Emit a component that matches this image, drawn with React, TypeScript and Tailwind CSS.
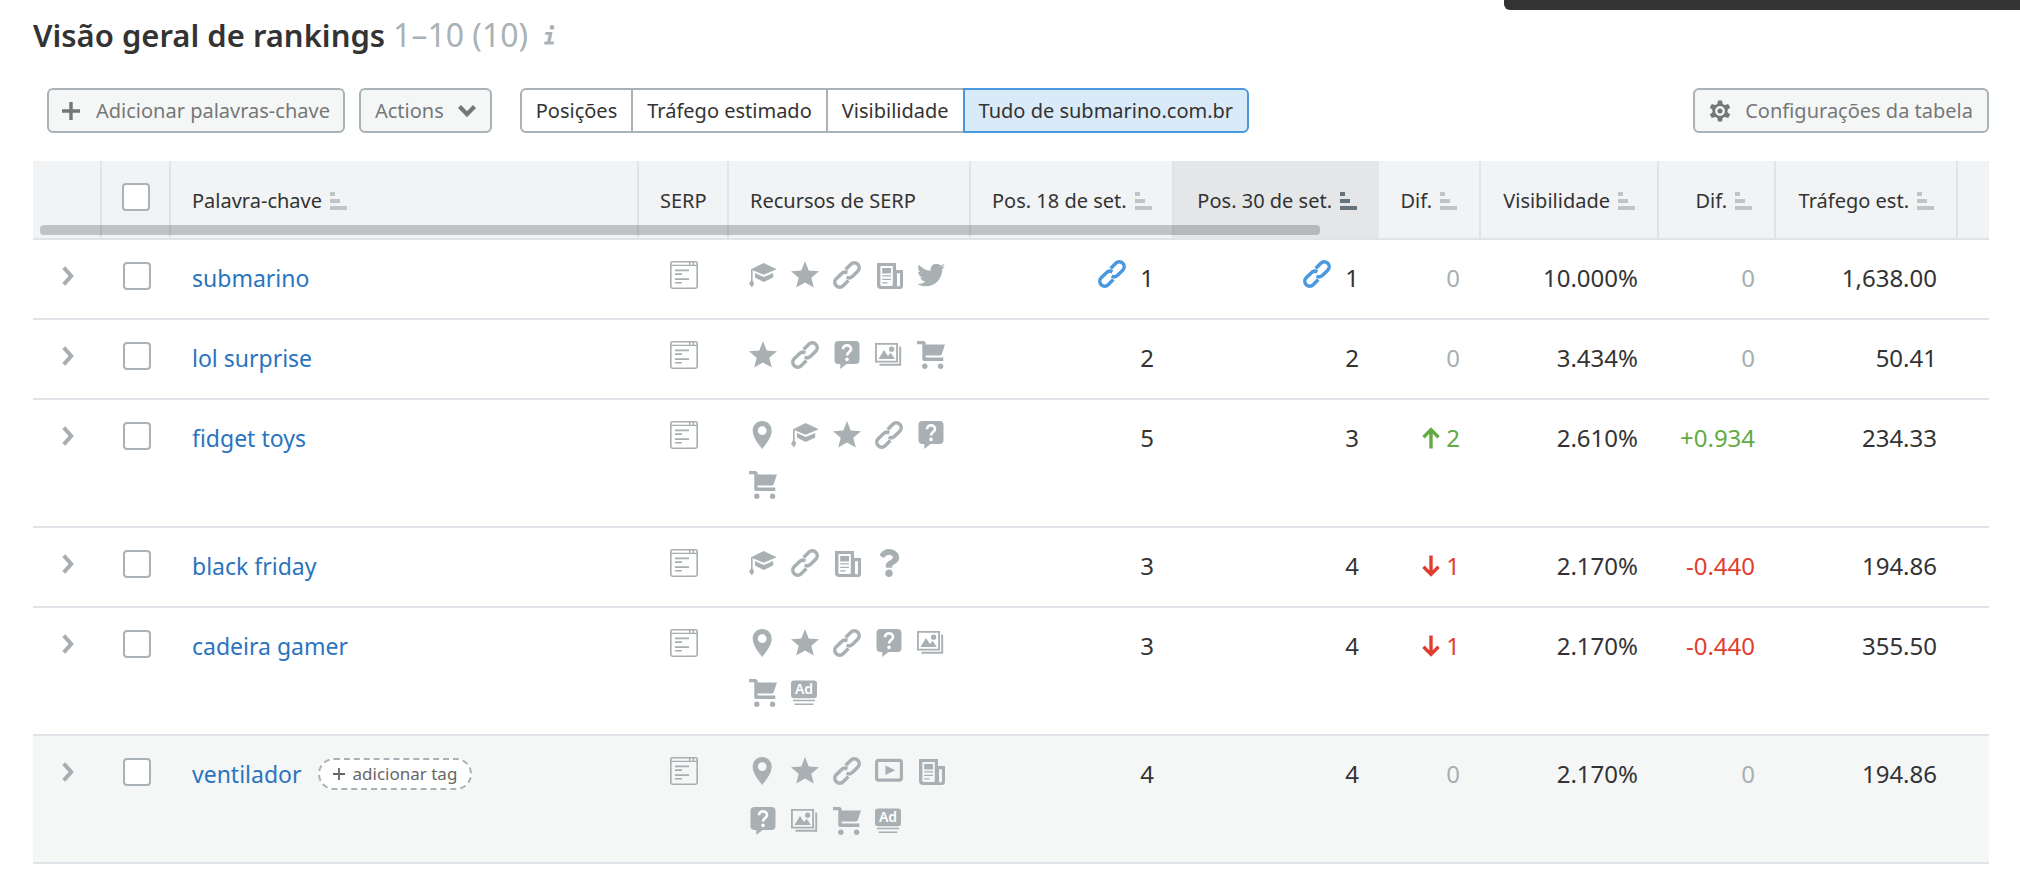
import React, { ReactNode } from "react";
import { FaTwitter, FaQuestion } from "react-icons/fa";

type IconProps = { className?: string };

const Svg = ({ children, className = "" }: IconProps & { children: ReactNode }) => (
  <svg viewBox="0 0 28 28" className={`size-7 shrink-0 ${className}`} fill="currentColor" aria-hidden="true">
    {children}
  </svg>
);

const LinkIcon = ({ className }: IconProps) => (
  <Svg className={className}>
    <g transform="translate(14 14) rotate(-45)" fill="none" stroke="currentColor" strokeWidth="3.5">
      <path d="M3 -4.9H10.3A4.9 4.9 0 0 1 10.3 4.9H3A4.9 4.9 0 0 1 -1.7 1.2" />
      <path d="M3 -4.9H10.3A4.9 4.9 0 0 1 10.3 4.9H3A4.9 4.9 0 0 1 -1.7 1.2" transform="rotate(180)" />
    </g>
  </Svg>
);

const CapIcon = () => (
  <Svg>
    <path d="M14.7 2 27.7 8.2 14.7 13.7 3.6 9.2V19.5L5.2 22.5 3 26.5 0 22.8 2 19.5V8.2Z" />
    <path d="M6 12 14.7 16 24.2 12V16.6L14.7 21 6 16.6Z" />
  </Svg>
);

const StarIcon = () => (
  <Svg>
    <path d="M14 0 17.7 9.4 28 10.2 20.3 16.8 22.8 26.4 14 21.4 5.2 26.4 7.7 16.8 0 10.2 10.3 9.4Z" />
  </Svg>
);

const NewsIcon = () => (
  <Svg>
    <path
      fillRule="evenodd"
      d="M2 2H21V9H28V25A3 3 0 0 1 25 28H6A4 4 0 0 1 2 24ZM5.4 5V23.5A1.5 1.5 0 0 0 6.9 25H16.3A1.5 1.5 0 0 0 17.8 23.5V5ZM22 12.2V24A1.3 1.3 0 0 0 25 24V12.2Z"
    />
    <path d="M7.2 7h8.8v5.4H7.2zM7.2 14.2h8.8v1.3H7.2zM7.2 17.7h8.8v1.3H7.2zM7.2 21.2h5.4v1.3H7.2z" />
  </Svg>
);

const TwitterIcon = () => <FaTwitter className="size-7 shrink-0" aria-hidden="true" />;
const QuestionIcon = () => <FaQuestion className="size-7 shrink-0" aria-hidden="true" />;

const FaqIcon = () => (
  <Svg>
    <path d="M5.5 0H22.5A4 4 0 0 1 26.5 4V19A4 4 0 0 1 22.5 23H13.5L7.3 28V23H5.5A4 4 0 0 1 1.5 19V4A4 4 0 0 1 5.5 0Z" />
    <path d="M10 8.2C10 3.2 18 3.2 18 8C18 11 14 11 14 14.6" fill="none" stroke="white" strokeWidth="2.7" />
    <circle cx="14" cy="18.4" r="1.8" fill="white" />
  </Svg>
);

const ImageIcon = () => (
  <Svg>
    <path d="M.9 2.9H22.1V20.6H.9Z" fill="none" stroke="currentColor" strokeWidth="1.9" />
    <path d="M25.2 5.5V23.8H4.5" fill="none" stroke="currentColor" strokeWidth="1.9" />
    <circle cx="16.6" cy="8.2" r="2.6" />
    <path d="M3.5 18 9 9 13 15 15.7 11.8 19.8 18Z" />
  </Svg>
);

const CartIcon = () => (
  <Svg>
    <path d="M0 0H6A2.6 2.6 0 0 1 8.6 3.4H28L24.8 13A2 2 0 0 1 23 14.4H8.6V16.6H26.3V20H7.2A2 2 0 0 1 5.3 18V3.2H0Z" />
    <circle cx="7.8" cy="25.2" r="2.7" />
    <circle cx="23.6" cy="25.2" r="2.7" />
  </Svg>
);

const PinIcon = () => (
  <Svg>
    <path
      fillRule="evenodd"
      d="M13.2 0C18.6 0 22.7 4.2 22.7 9.7C22.7 16 17 23 13.2 28C9.4 23 3.7 16 3.7 9.7C3.7 4.2 7.8 0 13.2 0ZM13.2 5.2A4.4 4.4 0 1 0 13.2 14A4.4 4.4 0 1 0 13.2 5.2Z"
    />
  </Svg>
);

const VideoIcon = () => (
  <Svg>
    <rect x="1.6" y="3.4" width="24.8" height="19.8" rx="2.2" fill="none" stroke="currentColor" strokeWidth="3.2" />
    <path d="M10.4 8.6 20.4 13.3 10.4 18Z" />
  </Svg>
);

const AdIcon = () => (
  <Svg>
    <rect x="0" y="1.4" width="26" height="17.8" rx="3" />
    <path d="M2 20.8h22v1.5H2zM3.5 24.6h19v1.5h-19z" />
    <text
      x="13"
      y="15.4"
      textAnchor="middle"
      fontFamily="'Noto Sans', sans-serif"
      fontSize="14"
      fontWeight="600"
      fill="white"
    >
      Ad
    </text>
  </Svg>
);

const SerpIcon = () => (
  <Svg>
    <rect x=".8" y=".8" width="26.4" height="26.4" rx="1.6" fill="none" stroke="currentColor" strokeWidth="1.6" />
    <path d="M1 4.4H27M19.8 1V4.4M23.4 1V4.4" fill="none" stroke="currentColor" strokeWidth="1.4" />
    <path d="M5 8.6h14v1.7H5zM5 12.3h7v1.7H5zM5 17.3h14v1.7H5zM5 20.9h7v1.7H5z" />
  </Svg>
);

const features = {
  cap: CapIcon,
  star: StarIcon,
  link: LinkIcon,
  news: NewsIcon,
  twitter: TwitterIcon,
  faq: FaqIcon,
  image: ImageIcon,
  cart: CartIcon,
  pin: PinIcon,
  question: QuestionIcon,
  video: VideoIcon,
  ad: AdIcon,
};

type Feature = keyof typeof features;

type Row = {
  keyword: string;
  features: Feature[];
  from: number;
  to: number;
  linked?: boolean;
  diff: number;
  visibility: string;
  visibilityDiff: string;
  traffic: string;
  hovered?: boolean;
};

const rows: Row[] = [
  { keyword: "submarino", features: ["cap", "star", "link", "news", "twitter"], from: 1, to: 1, linked: true, diff: 0, visibility: "10.000%", visibilityDiff: "0", traffic: "1,638.00" },
  { keyword: "lol surprise", features: ["star", "link", "faq", "image", "cart"], from: 2, to: 2, diff: 0, visibility: "3.434%", visibilityDiff: "0", traffic: "50.41" },
  { keyword: "fidget toys", features: ["pin", "cap", "star", "link", "faq", "cart"], from: 5, to: 3, diff: 2, visibility: "2.610%", visibilityDiff: "+0.934", traffic: "234.33" },
  { keyword: "black friday", features: ["cap", "link", "news", "question"], from: 3, to: 4, diff: -1, visibility: "2.170%", visibilityDiff: "-0.440", traffic: "194.86" },
  { keyword: "cadeira gamer", features: ["pin", "star", "link", "faq", "image", "cart", "ad"], from: 3, to: 4, diff: -1, visibility: "2.170%", visibilityDiff: "-0.440", traffic: "355.50" },
  { keyword: "ventilador", features: ["pin", "star", "link", "video", "news", "faq", "image", "cart", "ad"], from: 4, to: 4, diff: 0, visibility: "2.170%", visibilityDiff: "0", traffic: "194.86", hovered: true },
];

const diffColor = (diff: number) =>
  diff > 0 ? "text-[#62ab42]" : diff < 0 ? "text-[#e03e2f]" : "text-[#a6b0b3]";

const SortIcon = ({ active }: { active?: boolean }) => (
  <svg viewBox="0 0 18 18" className={`size-[18px] shrink-0 ${active ? "text-[#64747a]" : "text-[#bfc5c6]"}`} fill="currentColor" aria-hidden="true">
    <path d="M0 0h5v4H0zM0 7h10v4H0zM0 14h17v4H0z" />
  </svg>
);

const Checkbox = ({ label }: { label: string }) => (
  <input
    type="checkbox"
    aria-label={label}
    className="mx-auto block size-7 appearance-none rounded border-2 border-[#a9b2b6] bg-white checked:bg-[#4a98e0]"
  />
);

const HeadCell = ({ children, sort = true, active, end }: { children?: ReactNode; sort?: boolean; active?: boolean; end?: boolean }) => (
  <th
    scope="col"
    aria-sort={active ? "ascending" : undefined}
    className={`border-b-2 border-[#e0e4e8] px-[21px] pt-[26px] align-top font-normal ${
      active ? "bg-[#e4e6e8]" : "border-r-2 last:border-r-0"
    }`}
  >
    {sort ? (
      <button type="button" className={`flex items-center gap-2 whitespace-nowrap leading-7 ${end ? "ml-auto" : ""}`}>
        {children}
        <SortIcon active={active} />
      </button>
    ) : (
      <span className="block whitespace-nowrap text-left leading-7">{children}</span>
    )}
  </th>
);

const DiffArrow = ({ down }: { down: boolean }) => (
  <svg viewBox="0 0 18 22" className={`h-[22px] w-[18px] shrink-0 ${down ? "rotate-180" : ""}`} fill="none" stroke="currentColor" strokeWidth="3.4" aria-hidden="true">
    <path d="M9 21.5V2.5M1.5 10.2 9 2.6l7.5 7.6" />
  </svg>
);

const toolButton =
  "flex h-[45px] items-center rounded-md border-2 border-[#a9b2b6] bg-[#f5f7f7] text-[20px] whitespace-nowrap text-[#757778]";

const tabs = ["Posições", "Tráfego estimado", "Visibilidade", "Tudo de submarino.com.br"];

export default function App() {
  return (
    <main className="relative bg-white pr-[31px] pb-3 pl-[33px] font-['Noto_Sans',sans-serif] text-[#333]">
      <div className="absolute top-0 right-0 h-[10px] w-[516px] rounded-bl-md bg-[#333]" />

      <h1 className="flex items-center gap-2 pt-[14px] text-[31px] leading-[42px] font-semibold whitespace-nowrap">
        Visão geral de rankings
        <span className="text-[32px] font-normal text-[#a9b2b6]">1–10 (10)</span>
        <button type="button" aria-label="Informações" className="ml-2 text-[#a9b2b6]">
          <svg viewBox="0 0 12 20" className="h-5 w-3" fill="currentColor" aria-hidden="true">
            <circle cx="8" cy="2.4" r="2.4" />
            <path d="M1.6 7H8.6L6.6 16.6H10L9.5 19.4H0L.6 16.6H3.2L4.6 9.8H1Z" />
          </svg>
        </button>
      </h1>

      <div className="mt-8 flex items-center pl-[14px]">
        <button type="button" className={`${toolButton} gap-4 px-[13px]`}>
          <svg viewBox="0 0 18 18" className="size-[18px]" fill="currentColor" aria-hidden="true">
            <path d="M7.3 0h3.4v7.3H18v3.4h-7.3V18H7.3v-7.3H0V7.3h7.3z" />
          </svg>
          Adicionar palavras-chave
        </button>
        <button type="button" className={`${toolButton} ml-[14px] gap-[14px] px-[14px]`}>
          Actions
          <svg viewBox="0 0 18 12" className="h-3 w-[18px]" fill="none" stroke="currentColor" strokeWidth="4.2" aria-hidden="true">
            <path d="M1.5 1.5 9 9.2l7.5-7.7" />
          </svg>
        </button>
        <div className="ml-7 flex">
          {tabs.map((tab, i) => {
            const selected = i === tabs.length - 1;
            return (
              <button
                key={tab}
                type="button"
                aria-pressed={selected}
                className={`h-[45px] border-2 px-[14px] text-[20px] whitespace-nowrap first:rounded-l-md last:rounded-r-md ${
                  selected ? "border-[#4a98e0] bg-[#d9eaf8]" : "border-r-0 border-[#a9b2b6] bg-white"
                }`}
              >
                {tab}
              </button>
            );
          })}
        </div>
        <button type="button" className={`${toolButton} ml-auto gap-[14px] px-[14px]`}>
          <svg viewBox="0 0 22 22" className="size-[22px]" aria-hidden="true">
            <g fill="currentColor">
              <circle cx="11" cy="11" r="7.6" />
              <path d="M9 .4h4l1 5H8zM9 21.6h4l1-5H8z" />
              <path d="M9 .4h4l1 5H8zM9 21.6h4l1-5H8z" transform="rotate(60 11 11)" />
              <path d="M9 .4h4l1 5H8zM9 21.6h4l1-5H8z" transform="rotate(120 11 11)" />
            </g>
            <circle cx="11" cy="11" r="3.7" className="fill-current stroke-[#f5f7f7]" strokeWidth="2.4" />
          </svg>
          Configurações da tabela
        </button>
      </div>

      <div className="relative mt-7">
        <table className="w-full table-fixed border-separate border-spacing-0">
          <colgroup>
            <col className="w-[69px]" />
            <col className="w-[69px]" />
            <col />
            <col className="w-[90px]" />
            <col className="w-[242px]" />
            <col className="w-[203px]" />
            <col className="w-[205px]" />
            <col className="w-[102px]" />
            <col className="w-[178px]" />
            <col className="w-[117px]" />
            <col className="w-[182px]" />
            <col className="w-[31px]" />
          </colgroup>
          <thead>
            <tr className="h-[79px] bg-[#f1f3f5] text-[20px]">
              <HeadCell sort={false} />
              <th scope="col" className="border-r-2 border-b-2 border-[#e0e4e8] pt-[22px] align-top">
                <Checkbox label="Selecionar todas" />
              </th>
              <HeadCell>Palavra-chave</HeadCell>
              <HeadCell sort={false}>SERP</HeadCell>
              <HeadCell sort={false}>Recursos de SERP</HeadCell>
              <HeadCell end>Pos. 18 de set.</HeadCell>
              <HeadCell end active>Pos. 30 de set.</HeadCell>
              <HeadCell end>Dif.</HeadCell>
              <HeadCell end>Visibilidade</HeadCell>
              <HeadCell end>Dif.</HeadCell>
              <HeadCell end>Tráfego est.</HeadCell>
              <HeadCell sort={false} />
            </tr>
          </thead>
          <tbody>
            {rows.map((row) => (
              <tr
                key={row.keyword}
                className={`text-right text-[24px] leading-7 whitespace-nowrap [&>td]:border-b-2 [&>td]:border-[#e0e4e8] [&>td]:align-top ${
                  row.hovered ? "bg-[#f5f7f7]" : ""
                }`}
              >
                <td className="pt-[26px]">
                  <button type="button" aria-label={`Expandir ${row.keyword}`} className="mx-auto block text-[#a6aeb1]">
                    <svg viewBox="0 0 12 20" className="h-5 w-3" fill="none" stroke="currentColor" strokeWidth="4" aria-hidden="true">
                      <path d="M1.8 1.6 9.2 10l-7.4 8.4" />
                    </svg>
                  </button>
                </td>
                <td className="pt-[22px]">
                  <Checkbox label={`Selecionar ${row.keyword}`} />
                </td>
                <td className="px-[21px] pt-6 text-left text-[23px]">
                  <div className="flex items-center gap-4">
                    <a href="#" className="text-[#2a74bf]">
                      {row.keyword}
                    </a>
                    {row.hovered && (
                      <button
                        type="button"
                        className="-my-1 flex h-8 items-center gap-2 rounded-full border-2 border-dashed border-[#a9b2b6] bg-white px-[13px] text-[17px] text-[#666]"
                      >
                        <svg viewBox="0 0 12 12" className="size-3" fill="currentColor" aria-hidden="true">
                          <path d="M5.1 0h1.8v5.1H12v1.8H6.9V12H5.1V6.9H0V5.1h5.1z" />
                        </svg>
                        adicionar tag
                      </button>
                    )}
                  </div>
                </td>
                <td className="pt-[21px]">
                  <a href="#" aria-label={`SERP de ${row.keyword}`} className="flex justify-center text-[#a6aeb1]">
                    <SerpIcon />
                  </a>
                </td>
                <td className="px-[20px] pt-[21px]">
                  <div className={`flex flex-wrap gap-x-[14px] gap-y-[22px] text-[#a9b0b3] ${row.features.length > 5 ? "pb-[27px]" : "pb-[29px]"}`}>
                    {row.features.map((name) => {
                      const Icon = features[name];
                      return <Icon key={name} />;
                    })}
                  </div>
                </td>
                {[row.from, row.to].map((position, i) => (
                  <td key={i} className="px-[20px] pt-5">
                    <div className="flex justify-end gap-[14px]">
                      {row.linked && <LinkIcon className="text-[#4a98e0]" />}
                      <span className="pt-1">{position}</span>
                    </div>
                  </td>
                ))}
                <td className={`px-[21px] pt-6 ${diffColor(row.diff)}`}>
                  <div className="flex items-center justify-end gap-[6px]">
                    {row.diff !== 0 && <DiffArrow down={row.diff < 0} />}
                    {Math.abs(row.diff)}
                  </div>
                </td>
                <td className="px-[21px] pt-6">{row.visibility}</td>
                <td className={`px-[21px] pt-6 ${diffColor(parseFloat(row.visibilityDiff))}`}>{row.visibilityDiff}</td>
                <td className="px-[21px] pt-6">{row.traffic}</td>
                <td />
              </tr>
            ))}
          </tbody>
        </table>
        <div className="absolute top-16 left-[7px] h-[10px] w-[1280px] rounded bg-black/20" />
      </div>
    </main>
  );
}
